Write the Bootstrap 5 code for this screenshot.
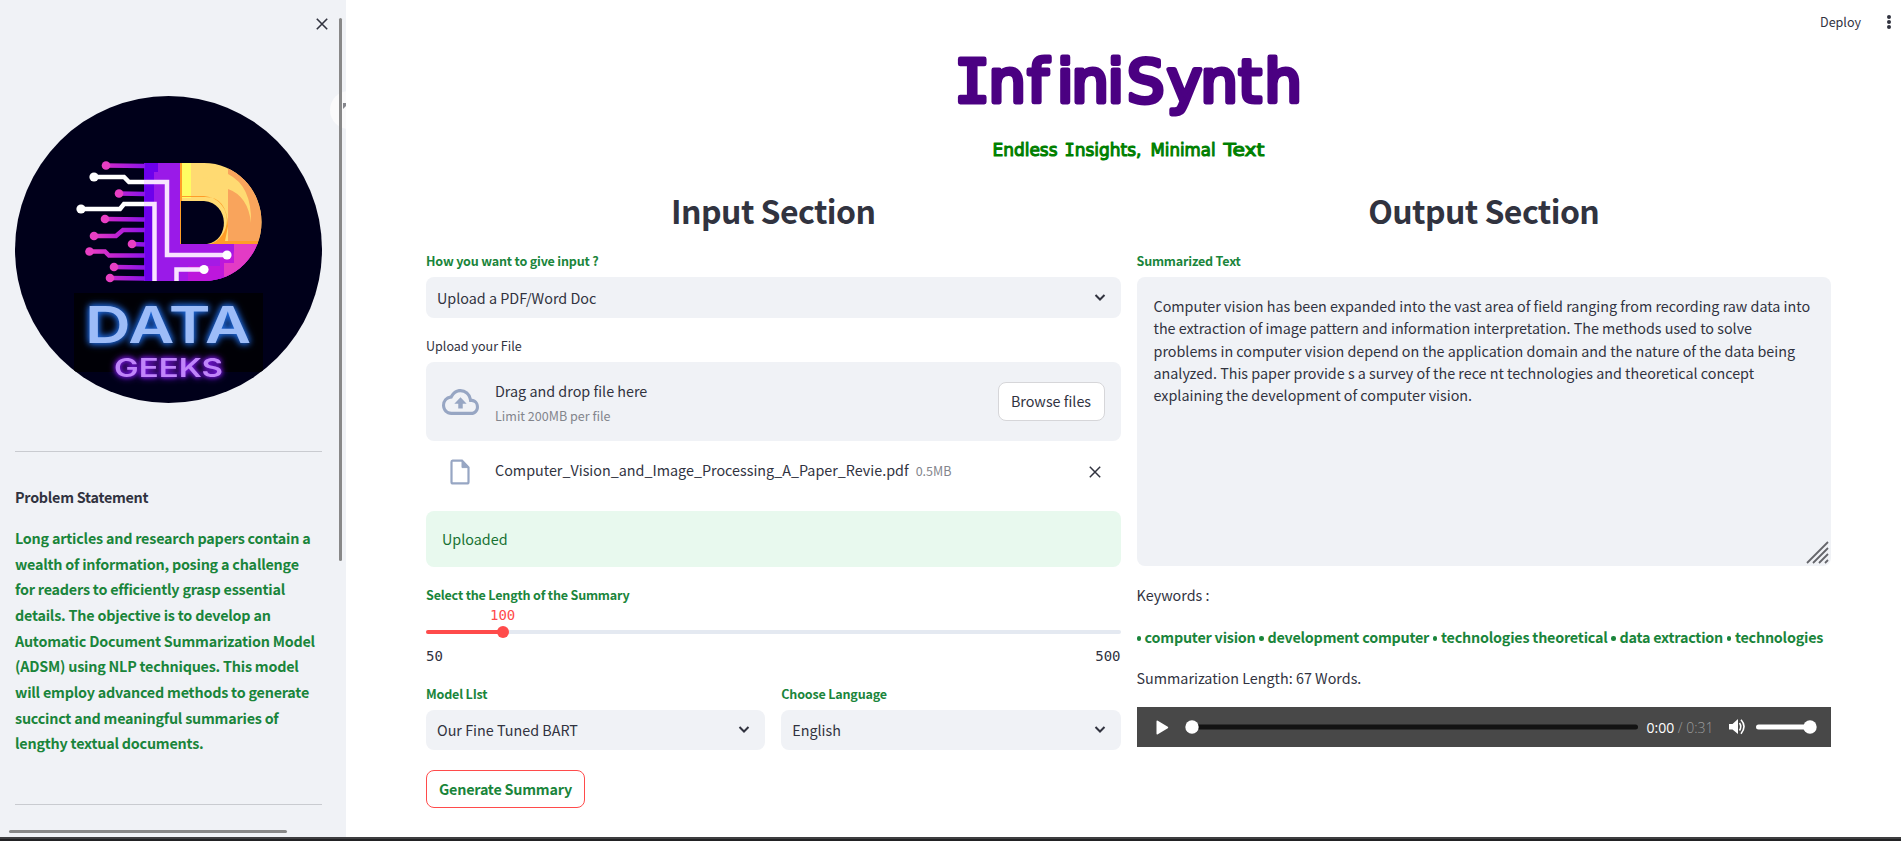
<!DOCTYPE html>
<html lang="en">
<head>
<meta charset="utf-8">
<meta name="viewport" content="width=device-width, initial-scale=1">
<title>InfiniSynth</title>
<link href="https://cdn.jsdelivr.net/npm/bootstrap@5.3.0/dist/css/bootstrap.min.css" rel="stylesheet">
<style>
  body { font-family: "Noto Sans CJK SC", "Open Sans", sans-serif; font-size: 14.35px; line-height: 24px; color: #31333f; background: #fff; height: 841px; overflow: hidden; }
  .app { height: 837px; }
  .side { width: 346px; background: #f0f2f6; padding: 0 24px 0 15px; overflow: hidden; }
  .side-close { height: 96px; padding: 18px 0 0 301px; }
  .side-line { height: 1px; background: #c9cbd0; }
  .vbar { left: 339px; top: 18px; width: 3px; height: 543px; background: #888; border-radius: 2px; }
  .hbar { left: 9px; top: 830px; width: 278px; height: 3px; background: #888; border-radius: 2px; }
  .bubble { left: 330px; top: 91px; width: 38px; height: 38px; background: #fafafb; border-radius: 50%; }
  .bubble i { left: 13px; top: 12px; width: 6px; height: 6px; background: #85868c; clip-path: polygon(0 0,100% 0,0 100%); }
  .statement { line-height: 25.65px; }
  .green { color: #1a853b; font-weight: 600; letter-spacing: -.015em; }
  .strong6 { font-weight: 600; letter-spacing: -.018em; }
  .page { padding: 0 70px 0 80px; min-width: 0; }
  .cols { gap: 16px; }
  .cols > * { flex: 1 1 0; min-width: 0; }
  .sect { font-size: 32px; line-height: 43px; font-weight: 600; letter-spacing: -.56px; padding-top: 2px; }
  .lbl { font-size: 12.55px; line-height: 20px; }
  .pick { background: #f0f2f6; border-radius: 8px; height: 41px; padding: 0 14px 0 11px; }
  .pick-sm { height: 40px; margin-top: 6px; }
  .drop { background: #f0f2f6; border-radius: 8px; height: 79px; padding: 0 16px; }
  .cap2 { font-size: 12.55px; line-height: 20px; color: #83858c; }
  .btn-browse { background: #fff; border: 1px solid #d6d6d9; border-radius: 8px; height: 39px; width: 107px; font-size: inherit; color: inherit; padding: 0 0 1px; }
  .btn-gen { background: #fff; border: 1px solid #ff4b4b; border-radius: 8px; height: 38px; width: 159px; font-size: inherit; padding: 0; }
  .ok { background: #e8f9ee; color: #177233; border-radius: 8px; height: 56px; padding: 0 16px; }
  .num { font-family: "DejaVu Sans Mono", monospace; font-size: 14px; line-height: 20px; }
  .rail { height: 4px; background: #e4e9f1; border-radius: 2px; }
  .fill { height: 4px; background: #ff4b4b; border-radius: 2px; }
  .knob { width: 12px; height: 12px; border-radius: 50%; background: #ff4b4b; top: -4px; margin-left: -6px; }
  .out { background: #f0f2f6; border-radius: 8px; height: 289px; padding: 18px 16px 0 17px; line-height: 22.3px; letter-spacing: -.01px; }
  .grip { right: 2px; bottom: 2px; }
  .dot { width: 4.4px; height: 4.4px; border-radius: 50%; background: #1a853b; display: inline-block; vertical-align: 2.5px; margin: 0 .7px; }
  .dot:first-child { margin-left: 0; }
  .audio { background: #484848; height: 40px; }
  .time { font-family: "Open Sans", sans-serif; font-size: 14px; color: #fff; }
  .bottom { height: 4px; background: linear-gradient(#3e3e40 50%, #222224 50%); }
  .deploy { right: 0; top: 12px; width: 100px; }
</style>
</head>
<body>
<div class="app d-flex">
  <aside class="side flex-shrink-0 position-relative">
    <div class="side-close"><svg class="d-block" width="12" height="12" stroke="#31333f" stroke-width="1.6"><path d="M.8.8 11.2 11.2M11.2.8.8 11.2"/></svg></div>
    <svg class="d-block" width="307" height="307" viewBox="15 96 307 307">
      <defs>
        <linearGradient id="wire" gradientUnits="userSpaceOnUse" x1="90" x2="146" y1="0" y2="0"><stop stop-color="#e83fc4"/><stop offset=".45" stop-color="#c024d0"/><stop offset="1" stop-color="#8a14ea"/></linearGradient>
        <clipPath id="disc"><circle cx="168.500" cy="249.500" r="153.500"/></clipPath>
        <clipPath id="dee"><path d="M180 163h24a57 58.500 0 0 1 0 118h-60V163z"/></clipPath>
      </defs>
      <circle cx="168.500" cy="249.500" r="153.500" fill="#00001a"/>
      <g clip-path="url(#disc)"><rect x="74" y="293" width="189" height="79" fill="#000006"/></g>
      <g clip-path="url(#dee)">
        <rect x="144" y="163" width="37" height="118" fill="#9a1ae8"/>
        <path d="M144 163h14v9h-4v109h-10z" fill="#6d00ec"/>
        <rect x="180" y="163" width="85" height="81" fill="#ffda72"/>
        <rect x="180" y="163" width="11" height="35" fill="#fffc62"/>
        <path d="M228 163h37v81h-37z" fill="#f9a45c"/>
        <path d="M228 174q24 12 23 49q-3-27-23-34zM203 178q9-2 17 3q-8 0-17-3z" fill="#ffda72"/>
        <path d="M181 244V163" fill="none" stroke="#ff9d28" stroke-width="2"/>
        <path d="M180 196h24c30 3 30 43 3 49h58v-4h-40l3-15q-1-30-24-29h-24z" fill="#ff9d28"/>
        <path d="M180 244h85v37h-85z" fill="#c51bd2"/>
        <path d="M180 244h55l-7 37h-48z" fill="#a51ae5"/>
        <path d="M188 266h32v-10h15l8-12h22v37h-77z" fill="#bd17dc"/>
        <path d="M234 244h31v37h-41v-18h10z" fill="#e33bc5"/>
      </g>
      <path d="M181 201h23c26 2 26 40 3 43h-26z" fill="#00001a"/>
      <g fill="none" stroke="url(#wire)" stroke-width="4.500">
        <path d="M106 165.500 145 166M119 193.500 145 194M105 219 145 219.500M94 236h22l7-6h22M131 244l14 .5M90 251.500h15l4 4h36M114 267l31 .5M110 278l35 .5"/>
      </g>
      <g fill="#e83fc4"><circle cx="106" cy="165.500" r="4.300"/><circle cx="119" cy="193.500" r="4.300"/><circle cx="105" cy="219" r="4.300"/><circle cx="94" cy="236" r="4.300"/><circle cx="132" cy="244" r="4.300"/><circle cx="89.500" cy="251.500" r="4.300"/><circle cx="114" cy="267" r="4.300"/><circle cx="110" cy="278" r="4.300"/></g>
      <g fill="none" stroke="#fff" stroke-width="4.500">
        <path d="M94 177h30l5 5h15M81 209h39l4-5h20"/>
        <path d="M144 182h23v73h60M144 204h10.500v77M176.500 281v-11.500H204" stroke="#f8e3ff"/>
      </g>
      <g fill="#fff"><circle cx="94" cy="177" r="4.600"/><circle cx="81" cy="209" r="4.600"/><circle cx="227" cy="255" r="4.600"/><circle cx="204" cy="269.500" r="4.600"/></g>
      <g font-family="Inter, sans-serif" font-weight="600">
        <text x="85" y="343" font-size="51" textLength="166" lengthAdjust="spacingAndGlyphs" fill="#9dbcf8" style="filter:drop-shadow(0 0 3px #1e6be0) drop-shadow(0 0 3px #1850b0)">DATA</text>
        <text x="114" y="377" font-size="26" textLength="109" lengthAdjust="spacingAndGlyphs" fill="#c085fa" style="filter:drop-shadow(0 0 2px #7a18e0) drop-shadow(0 0 3px #6a10d0)">GEEKS</text>
      </g>
    </svg>
    <div class="side-line" style="margin-top:48px"></div>
    <div class="strong6" style="margin-top:33px">Problem Statement</div>
    <div class="statement green text-nowrap" style="margin-top:16px">Long articles and research papers contain a<br>wealth of information, posing a challenge<br>for readers to efficiently grasp essential<br>details. The objective is to develop an<br>Automatic Document Summarization Model<br>(ADSM) using NLP techniques. This model<br>will employ advanced methods to generate<br>succinct and meaningful summaries of<br>lengthy textual documents.</div>
    <div class="side-line" style="margin-top:48px"></div>
    <div class="bubble position-absolute"><i class="position-absolute"></i></div>
    <div class="vbar position-absolute"></div>
    <div class="hbar position-absolute"></div>
  </aside>

  <main class="page flex-grow-1 position-relative">
    <div class="deploy position-absolute d-flex align-items-center">
      <span class="lbl" style="margin-left:19px">Deploy</span>
      <svg class="ms-auto" width="20" height="16" fill="#31333f"><circle cx="8" cy="3" r="2"/><circle cx="8" cy="8" r="2"/><circle cx="8" cy="13" r="2"/></svg>
    </div>
    <h1 class="m-0 lh-1"><svg class="d-block mx-auto" width="400" height="187" viewBox="928.500 0 400 187" font-family="DejaVu Sans, sans-serif" stroke-linejoin="round" stroke-linecap="round">
      <text y="102" x="954 988 1027 1056.500 1071 1107 1126.500 1166.500 1200 1238 1264" font-size="59" fill="#4b0082" stroke="#4b0082" stroke-width="4.800"><tspan font-family="DejaVu Sans Mono">I</tspan>nfiniSynth</text>
      <g font-size="18" fill="#008000" stroke="#008000" stroke-width="1.100">
        <text x="992" y="155.500" textLength="65" lengthAdjust="spacingAndGlyphs">Endless</text>
        <text x="1064" y="155.500" textLength="77" lengthAdjust="spacingAndGlyphs"><tspan font-family="DejaVu Sans Mono">I</tspan>nsights,</text>
        <text x="1150" y="155.500" textLength="65" lengthAdjust="spacingAndGlyphs">Minimal</text>
        <text x="1223" y="155.500" textLength="41" lengthAdjust="spacingAndGlyphs">Text</text>
      </g>
    </svg></h1>
    <div class="cols d-flex">
      <section>
        <h2 class="sect text-center m-0">Input Section</h2>
        <div class="lbl green" style="margin-top:19px">How you want to give input ?</div>
        <div class="pick d-flex align-items-center" style="margin-top:6px"><span>Upload a PDF/Word Doc</span><svg class="ms-auto" width="14" height="10" fill="none" stroke="#31333f" stroke-width="2"><path d="m2.500 2 4.500 4.500L11.500 2"/></svg></div>
        <div class="lbl" style="margin-top:18px">Upload your File</div>
        <div class="drop d-flex align-items-center" style="margin-top:6px">
          <svg width="37" height="26" viewBox="0 4 24 16" preserveAspectRatio="none" fill="#97a6c3"><path d="M19.350 10.040A7.490 7.490 0 0 0 12 4C9.110 4 6.600 5.640 5.350 8.040A5.994 5.994 0 0 0 0 14c0 3.310 2.690 6 6 6h13c2.760 0 5-2.240 5-5 0-2.640-2.050-4.780-4.650-4.960zM19 18H6c-2.210 0-4-1.790-4-4 0-2.050 1.530-3.760 3.560-3.970l1.070-.11.5-.95A5.469 5.469 0 0 1 12 6c2.620 0 4.880 1.860 5.390 4.430l.3 1.500 1.530.11A2.980 2.980 0 0 1 22 15c0 1.650-1.350 3-3 3zM8 13h2.550v3h2.900v-3H16l-4-4z"/></svg>
          <div style="margin-left:16px;padding-top:2px"><div>Drag and drop file here</div><div class="cap2" style="margin-top:3px">Limit 200MB per file</div></div>
          <button class="btn btn-browse ms-auto">Browse files</button>
        </div>
        <div class="d-flex align-items-center" style="height:26px;margin-top:18px;padding:0 20px 0 24px">
          <svg width="20" height="26" fill="none" stroke="#97a6c3" stroke-width="2.200"><path d="M2.500 1.600h9.500l6.500 6.800v14.500q0 1.500-1.500 1.500H3q-1.500 0-1.500-1.500V3q0-1.400 1-1.400z"/><path d="M12 1.600v7h6.500z" fill="#97a6c3" stroke-width="1"/></svg>
          <span class="pb-1" style="margin-left:25px">Computer_Vision_and_Image_Processing_A_Paper_Revie.pdf</span>
          <span class="cap2 pb-1" style="margin-left:7px;padding-top:2px">0.5MB</span>
          <svg class="ms-auto" width="12" height="12" stroke="#31333f" stroke-width="1.500"><path d="M.8.8 11.200 11.200M11.200.8.8 11.200"/></svg>
        </div>
        <div class="ok d-flex align-items-center" style="margin-top:26px"><span>Uploaded</span></div>
        <div class="lbl green" style="margin-top:18px">Select the Length of the Summary</div>
        <div class="num" style="color:#ff4b4b;padding-left:64px">100</div>
        <div class="rail position-relative" style="margin-top:5px"><div class="fill" style="width:11.100%"></div><div class="knob position-absolute" style="left:11.100%"></div></div>
        <div class="num d-flex justify-content-between" style="margin-top:12px"><span>50</span><span>500</span></div>
        <div class="cols d-flex" style="margin-top:18px">
          <div><div class="lbl green">Model LIst</div>
            <div class="pick pick-sm d-flex align-items-center"><span>Our Fine Tuned BART</span><svg class="ms-auto" width="14" height="10" fill="none" stroke="#31333f" stroke-width="2"><path d="m2.500 2 4.500 4.500L11.500 2"/></svg></div></div>
          <div><div class="lbl green">Choose Language</div>
            <div class="pick pick-sm d-flex align-items-center"><span>English</span><svg class="ms-auto" width="14" height="10" fill="none" stroke="#31333f" stroke-width="2"><path d="m2.500 2 4.500 4.500L11.500 2"/></svg></div></div>
        </div>
        <button class="btn btn-gen green" style="margin-top:20px">Generate Summary</button>
      </section>
      <section>
        <h2 class="sect text-center m-0">Output Section</h2>
        <div class="lbl green" style="margin-top:19px">Summarized Text</div>
        <div class="out position-relative text-nowrap" style="margin-top:6px">Computer vision has been expanded into the vast area of field ranging from recording raw data into<br>the extraction of image pattern and information interpretation. The methods used to solve<br>problems in computer vision depend on the application domain and the nature of the data being<br>analyzed. This paper provide s a survey of the rece nt technologies and theoretical concept<br>explaining the development of computer vision.
          <svg class="grip position-absolute" width="23" height="23" fill="none" stroke="#65666b" stroke-width="1.800"><path d="M1 22 22 1M7 22 22 7M13 22l9-9M19 22l3-3"/></svg></div>
        <div style="margin-top:17px">Keywords :</div>
        <div class="green text-nowrap" style="margin-top:18px"><i class="dot"></i> computer vision <i class="dot"></i> development computer <i class="dot"></i> technologies theoretical <i class="dot"></i> data extraction <i class="dot"></i> technologies</div>
        <div style="margin-top:17px">Summarization Length: 67 Words.</div>
        <div class="audio d-flex align-items-center" style="margin-top:17px;padding:0 14px 0 19px">
          <svg width="13" height="15" fill="#fff"><path d="M.5 1.500q0-1.500 1.300-.8l10 6q1 .8 0 1.600l-10 6q-1.300.7-1.300-.8z"/></svg>
          <svg width="455" height="18" style="margin-left:15px"><rect x="6" y="6.500" width="448" height="5" rx="2.500" fill="#131313"/><circle cx="8" cy="9" r="6.700" fill="#fff"/></svg>
          <span class="time" style="margin-left:8px;padding-top:2px">0:00 <span style="color:#9c9c9c;font-weight:300">/ 0:31</span></span>
          <svg width="17" height="16" class="ms-auto" fill="#fff"><path d="M0 5h3.500L9 0v15L3.500 10.500H0z"/><path d="M10.500 4q2.500 3.500 0 7.500M12 .8q6 6.500 0 14" fill="none" stroke="#fff" stroke-width="1.600"/></svg>
          <svg width="61" height="18" style="margin-left:10px"><rect x="0" y="6.500" width="55" height="5" rx="2.500" fill="#fff"/><circle cx="54" cy="9" r="6.700" fill="#fff"/></svg>
        </div>
      </section>
    </div>
  </main>
</div>
<div class="bottom"></div>
<script src="https://cdn.jsdelivr.net/npm/bootstrap@5.3.0/dist/js/bootstrap.bundle.min.js"></script>
</body>
</html>
